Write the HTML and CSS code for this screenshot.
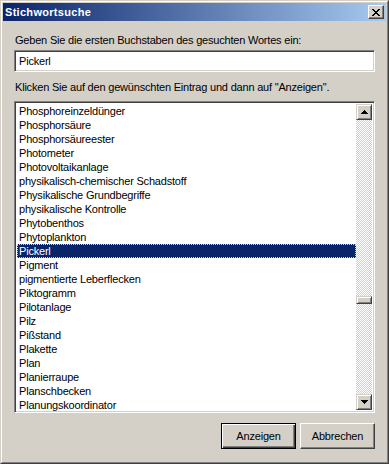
FILE: index.html
```html
<!DOCTYPE html>
<html lang="de">
<head>
    <meta charset="UTF-8">
    <title>Stichwortsuche</title>
    <link rel="stylesheet" href="styles.css">
</head>
<body>
    <div class="window">
        <div class="frame">
            <div class="titlebar">
                <span class="title">Stichwortsuche</span>
                <button class="close-btn" title="Schließen">
                    <svg width="8" height="7" viewBox="0 0 8 7">
                        <path d="M0 0h2v1h1v1h2v-1h1v-1h2v1h-1v1h-1v1h-1v1h1v1h1v1h1v1h-2v-1h-1v-1h-2v1h-1v1h-2v-1h1v-1h1v-1h1v-1h-1v-1h-1v-1h-1z" fill="#000"/>
                    </svg>
                </button>
            </div>

            <div class="content">
                <label class="label first" for="search">Geben Sie die ersten Buchstaben des gesuchten Wortes ein:</label>
                <div class="sunken textbox">
                    <input type="text" id="search" value="Pickerl">
                </div>

                <div class="label second">Klicken Sie auf den gewünschten Eintrag und dann auf "Anzeigen".</div>
                <div class="sunken listbox">
                    <ul class="items">
                        <li>Phosphoreinzeldünger</li>
                        <li>Phosphorsäure</li>
                        <li>Phosphorsäureester</li>
                        <li>Photometer</li>
                        <li>Photovoltaikanlage</li>
                        <li>physikalisch-chemischer Schadstoff</li>
                        <li>Physikalische Grundbegriffe</li>
                        <li>physikalische Kontrolle</li>
                        <li>Phytobenthos</li>
                        <li>Phytoplankton</li>
                        <li class="selected">Pickerl</li>
                        <li>Pigment</li>
                        <li>pigmentierte Leberflecken</li>
                        <li>Piktogramm</li>
                        <li>Pilotanlage</li>
                        <li>Pilz</li>
                        <li>Pißstand</li>
                        <li>Plakette</li>
                        <li>Plan</li>
                        <li>Planierraupe</li>
                        <li>Planschbecken</li>
                        <li>Planungskoordinator</li>
                    </ul>
                    <div class="scrollbar">
                        <div class="raised scroll-btn">
                            <svg width="7" height="4" viewBox="0 0 7 4"><path d="M3 0h1v1h1v1h1v1h1v1h-7v-1h1v-1h1v-1h1z" fill="#000"/></svg>
                        </div>
                        <div class="track">
                            <svg class="checker" width="16" height="100%" shape-rendering="crispEdges">
                                <defs>
                                    <pattern id="dots" width="2" height="2" patternUnits="userSpaceOnUse">
                                        <rect width="2" height="2" fill="#fff"/>
                                        <rect x="1" y="0" width="1" height="1" fill="#d4d0c8"/>
                                        <rect x="0" y="1" width="1" height="1" fill="#d4d0c8"/>
                                    </pattern>
                                </defs>
                                <rect width="16" height="100%" fill="url(#dots)"/>
                            </svg>
                            <div class="raised thumb"></div>
                        </div>
                        <div class="raised scroll-btn">
                            <svg width="7" height="4" viewBox="0 0 7 4"><path d="M0 0h7v1h-1v1h-1v1h-1v1h-1v-1h-1v-1h-1v-1h-1z" fill="#000"/></svg>
                        </div>
                    </div>
                </div>

                <div class="buttons">
                    <button class="btn default">Anzeigen</button>
                    <button class="btn">Abbrechen</button>
                </div>
            </div>
        </div>
    </div>
</body>
</html>
```

FILE: styles.css
```css
body {
    margin: 0;
    font-family: "Liberation Sans", Arial, sans-serif;
    font-size: 11px;
    letter-spacing: -0.2px;
    color: black;
    background: #d4d0c8;
}

.window {
    width: 389px;
    height: 464px;
    box-sizing: border-box;
    border: 1px solid;
    border-color: #d4d0c8 #404040 #404040 #d4d0c8;
    background: #d4d0c8;
}

.frame {
    height: 100%;
    box-sizing: border-box;
    border: 1px solid;
    border-color: #fff #808080 #808080 #fff;
    padding: 1px;
    display: flex;
    flex-direction: column;
}

.titlebar {
    height: 18px;
    display: flex;
    align-items: center;
    justify-content: space-between;
    padding: 0 2px 0 2px;
    background: linear-gradient(to right, #0a246a, #a6caf0);
}

.title {
    color: white;
    font-weight: bold;
    font-size: 11px;
    letter-spacing: 0.3px;
}

.close-btn {
    width: 16px;
    height: 14px;
    padding: 0;
    margin: 0;
    box-sizing: border-box;
    border: 1px solid;
    border-color: #fff #404040 #404040 #fff;
    box-shadow: inset -1px -1px 0 #808080;
    background: #d4d0c8;
    display: flex;
    align-items: center;
    justify-content: center;
}

.content {
    flex: 1;
    display: flex;
    flex-direction: column;
    padding: 13px 11px 0 11px;
}

.label {
    display: block;
    line-height: 13px;
    padding-left: 1px;
    white-space: nowrap;
}

.label.second {
    margin-top: 9px;
}

.sunken {
    box-sizing: border-box;
    border: 1px solid;
    border-color: #808080 #fff #fff #808080;
    box-shadow: inset 1px 1px 0 #404040, inset -1px -1px 0 #d4d0c8;
    background: white;
}

.textbox {
    margin-top: 3px;
    height: 22px;
    padding: 2px;
}

.textbox input {
    width: 100%;
    height: 100%;
    box-sizing: border-box;
    border: none;
    outline: none;
    padding: 0 0 0 2px;
    font: inherit;
    letter-spacing: inherit;
    background: transparent;
}

.listbox {
    margin-top: 7px;
    height: 312px;
    padding: 1px;
    display: flex;
}

.items {
    flex: 1;
    list-style: none;
    margin: 1px 0 0 1px;
    padding: 0;
}

.items li {
    height: 14px;
    line-height: 14px;
    padding-left: 2px;
    white-space: nowrap;
}

.items li.selected {
    background: #0a246a;
    color: white;
    outline: 1px dotted #d4d0c8;
    outline-offset: -1px;
}

.scrollbar {
    width: 16px;
    margin: 1px 1px 1px 0;
    display: flex;
    flex-direction: column;
}

.raised {
    box-sizing: border-box;
    border: 1px solid;
    border-color: #d4d0c8 #404040 #404040 #d4d0c8;
    box-shadow: inset 1px 1px 0 #fff, inset -1px -1px 0 #808080;
    background: #d4d0c8;
}

.scroll-btn {
    height: 16px;
    display: flex;
    align-items: center;
    justify-content: center;
}

.track {
    flex: 1;
    display: grid;
    grid-template: 1fr / 16px;
    overflow: hidden;
}

.checker,
.thumb {
    grid-area: 1 / 1;
}

.checker {
    display: block;
}

.thumb {
    align-self: start;
    margin-top: 176px;
    height: 8px;
}

.buttons {
    display: flex;
    justify-content: flex-end;
    gap: 4px;
    margin-top: 10px;
}

.btn {
    width: 75px;
    height: 26px;
    box-sizing: border-box;
    padding: 0;
    font: inherit;
    letter-spacing: inherit;
    color: black;
    background: #d4d0c8;
    border: 1px solid;
    border-color: #fff #404040 #404040 #fff;
    box-shadow: inset -1px -1px 0 #808080;
}

.btn.default {
    border-color: #000;
    box-shadow: inset 1px 1px 0 #fff, inset -1px -1px 0 #404040, inset -2px -2px 0 #808080;
}
```
